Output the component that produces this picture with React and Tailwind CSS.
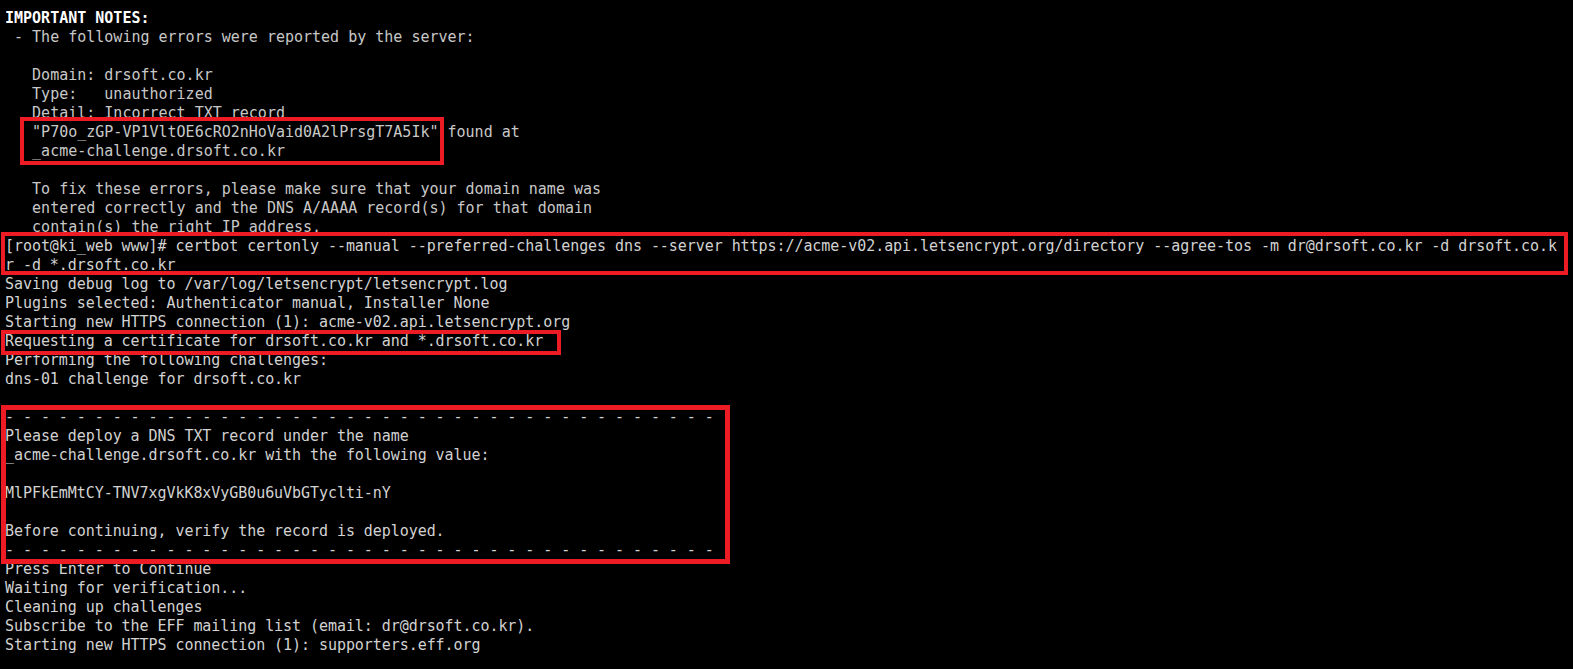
import React from "react";

const topLines = [
  { t: "IMPORTANT NOTES:", bold: true },
  { t: " - The following errors were reported by the server:" },
  { t: "" },
  { t: "   Domain: drsoft.co.kr" },
  { t: "   Type:   unauthorized" },
  { t: "   Detail: Incorrect TXT record" },
  { t: '   "P70o_zGP-VP1VltOE6cRO2nHoVaid0A2lPrsgT7A5Ik" found at' },
  { t: "   _acme-challenge.drsoft.co.kr" },
  { t: "" },
  { t: "   To fix these errors, please make sure that your domain name was" },
  { t: "   entered correctly and the DNS A/AAAA record(s) for that domain" },
  { t: "   contain(s) the right IP address." },
];

const dash = "- - - - - - - - - - - - - - - - - - - - - - - - - - - - - - - - - - - - - - - -";

const bottomLines = [
  "[root@ki_web www]# certbot certonly --manual --preferred-challenges dns --server https://acme-v02.api.letsencrypt.org/directory --agree-tos -m dr@drsoft.co.kr -d drsoft.co.k",
  "r -d *.drsoft.co.kr",
  "Saving debug log to /var/log/letsencrypt/letsencrypt.log",
  "Plugins selected: Authenticator manual, Installer None",
  "Starting new HTTPS connection (1): acme-v02.api.letsencrypt.org",
  "Requesting a certificate for drsoft.co.kr and *.drsoft.co.kr",
  "Performing the following challenges:",
  "dns-01 challenge for drsoft.co.kr",
  "",
  dash,
  "Please deploy a DNS TXT record under the name",
  "_acme-challenge.drsoft.co.kr with the following value:",
  "",
  "MlPFkEmMtCY-TNV7xgVkK8xVyGB0u6uVbGTyclti-nY",
  "",
  "Before continuing, verify the record is deployed.",
  dash,
  "Press Enter to Continue",
  "Waiting for verification...",
  "Cleaning up challenges",
  "Subscribe to the EFF mailing list (email: dr@drsoft.co.kr).",
  "Starting new HTTPS connection (1): supporters.eff.org",
];

export default function App() {
  return (
    <div className="relative min-h-screen w-full overflow-hidden bg-black pl-[5px] pt-[9px] text-[15px] leading-[19px] text-[#c8c8c8] [font-family:'DejaVu_Sans_Mono','Liberation_Mono',monospace]">
      <div className="whitespace-pre">
        {topLines.map((l, i) => (
          <div
            key={i}
            className={l.bold ? "h-[19px] font-bold text-white" : "h-[19px]"}
          >
            {l.t}
          </div>
        ))}
      </div>
      <div className="whitespace-pre tracking-[-0.06px] text-[#d2d2d2]">
        {bottomLines.map((l, i) => (
          <div key={i} className="h-[19px]">
            {l}
          </div>
        ))}
      </div>

      {/* red annotation boxes */}
      <div className="pointer-events-none absolute left-[20px] top-[117px] h-[48px] w-[424px] border-4 border-[#ed1c24]" />
      <div className="pointer-events-none absolute left-[1px] top-[232px] h-[43px] w-[1567px] border-4 border-[#ed1c24]" />
      <div className="pointer-events-none absolute left-[1px] top-[330px] h-[25px] w-[560px] border-4 border-[#ed1c24]" />
      <div className="pointer-events-none absolute left-[1px] top-[405px] h-[159px] w-[729px] border-[5px] border-[#ed1c24]" />
    </div>
  );
}
